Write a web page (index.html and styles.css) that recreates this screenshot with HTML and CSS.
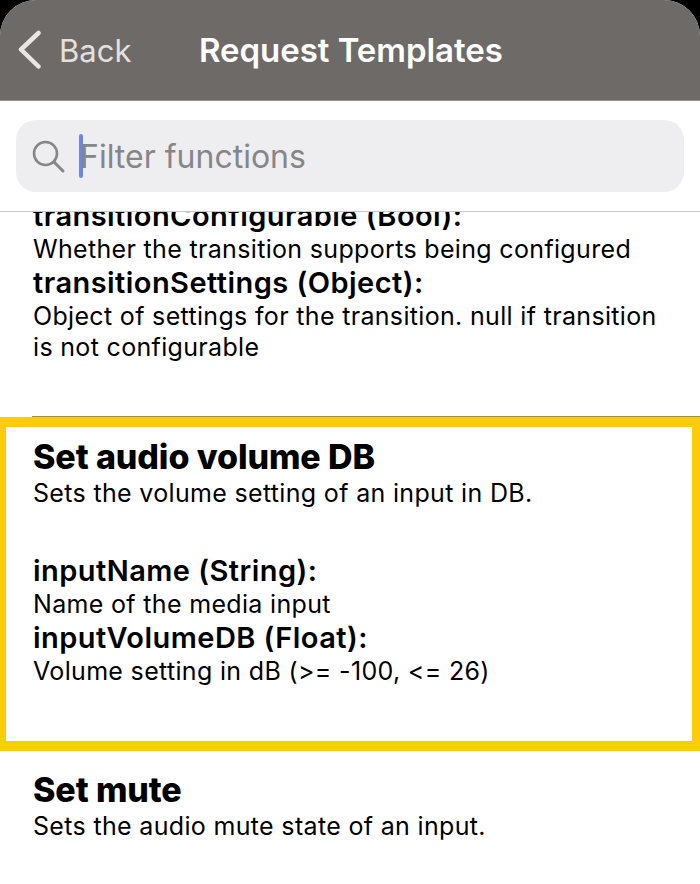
FILE: index.html
```html
<!DOCTYPE html>
<html lang="en">
<head>
<meta charset="utf-8">
<title>Request Templates</title>
<link rel="stylesheet" href="styles.css">
</head>
<body>
<div class="app">
  <header class="nav">
    <a class="back">
      <svg class="chevron" width="26" height="40" viewBox="0 0 26 40"><path d="M22.5 3 L5 19.5 L22.5 36.500" fill="none" stroke="#e9e6e3" stroke-width="4.500" stroke-linecap="round" stroke-linejoin="round"/></svg>
      <span>Back</span>
    </a>
    <h1 class="title">Request Templates</h1>
  </header>
  <div class="searchbar">
    <div class="search">
      <svg class="glass" width="36" height="36" viewBox="0 0 36 36"><circle cx="15.500" cy="15.500" r="11.500" fill="none" stroke="#86868a" stroke-width="2.600"/><path d="M24 24 L33 33" stroke="#86868a" stroke-width="3" stroke-linecap="round"/></svg>
      <span class="caret"></span>
      <span class="placeholder">Filter functions</span>
    </div>
  </div>
  <main class="list">
    <section class="item first">
      <h3>transitionConfigurable (Bool):</h3>
      <p>Whether the transition supports being configured</p>
      <h3>transitionSettings (Object):</h3>
      <p>Object of settings for the transition. null if transition is not configurable</p>
    </section>
    <div class="rule"></div>
    <section class="item selected">
      <h2>Set audio volume DB</h2>
      <p class="desc">Sets the volume setting of an input in DB.</p>
      <h3>inputName (String):</h3>
      <p>Name of the media input</p>
      <h3>inputVolumeDB (Float):</h3>
      <p>Volume setting in dB (&gt;= -100, &lt;= 26)</p>
    </section>
    <section class="item last">
      <h2>Set mute</h2>
      <p class="desc">Sets the audio mute state of an input.</p>
    </section>
  </main>
</div>
</body>
</html>
```
FILE: styles.css
```css
* { box-sizing: border-box; }
html, body { margin: 0; height: 100%; background: #000; }
body { font-family: Inter, "Liberation Sans", sans-serif; color: #000; overflow: hidden; }
.app { width: 700px; height: 884px; background: #fff; border-radius: 36px 36px 0 0; overflow: hidden; display: flex; flex-direction: column; }
.nav { height: 101px; flex: none; background: #6e6a68; border-bottom: 1px solid #97948f; display: flex; align-items: center; padding: 0 0 0 16px; }
.back { display: flex; align-items: center; gap: 17px; color: #e3e0dd; font-size: 31px; width: 183px; }
.chevron { flex: none; }
.title { margin: 0; color: #fff; font-size: 33px; font-weight: 600; letter-spacing: -0.05px; }
.searchbar { height: 111px; flex: none; padding: 19px 16px 0 16px; border-bottom: 1px solid #c8c8c8; }
.search { height: 72px; background: #eeeef0; border-radius: 20px; display: flex; align-items: center; padding-left: 14px; position: relative; }
.glass { flex: none; }
.caret { width: 4px; height: 44px; background: #6f86dd; border-radius: 2px; margin-left: 13px; flex: none; }
.placeholder { color: #85858a; font-size: 32px; margin-left: -3px; }
.list { flex: 1; overflow: hidden; }
.item { padding: 0 32px 0 33px; }
.item h2 { margin: 0; font-size: 34px; line-height: 42px; font-weight: 800; letter-spacing: -0.1px; }
.item h3 { margin: 0; font-size: 29px; line-height: 36px; font-weight: 600; letter-spacing: 0.45px; }
.item p { margin: 0; font-size: 25px; line-height: 31px; font-weight: 400; letter-spacing: 0.33px; }
.first { margin-top: -14px; height: 218px; }
.rule { height: 1px; margin-left: 32px; background: #9f9038; }
.selected { height: 334px; border-style: solid; border-color: #ffcc08; border-width: 10px 8px 10px 6px; padding: 9px 20px 0 27px; }
.desc { margin-bottom: 44px !important; }
.last { padding-top: 18px; }
```
